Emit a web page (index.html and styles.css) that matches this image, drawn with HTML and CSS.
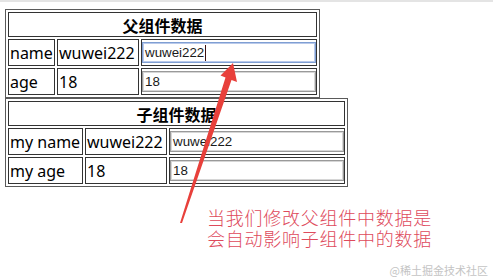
FILE: index.html
```html
<!DOCTYPE html>
<html lang="zh">
<head>
<meta charset="utf-8">
<title>父子组件数据</title>
<link rel="stylesheet" href="styles.css">
</head>
<body>
<div class="topbar"></div>
<main class="content">
  <table class="grid parent">
    <colgroup><col class="k1"><col class="k2"><col class="k3"></colgroup>
    <tr><th colspan="3">父组件数据</th></tr>
    <tr>
      <td>name</td>
      <td>wuwei222</td>
      <td class="c3"><div class="field focused">wuwei222<span class="caret"></span></div></td>
    </tr>
    <tr>
      <td>age</td>
      <td>18</td>
      <td class="c3"><div class="field">18</div></td>
    </tr>
  </table>
  <table class="grid child">
    <colgroup><col class="k1"><col class="k2"><col class="k3"></colgroup>
    <tr><th colspan="3">子组件数据</th></tr>
    <tr>
      <td>my name</td>
      <td>wuwei222</td>
      <td class="c3"><div class="field">wuwei222</div></td>
    </tr>
    <tr>
      <td>my age</td>
      <td>18</td>
      <td class="c3"><div class="field">18</div></td>
    </tr>
  </table>
  <div class="note">
    <p class="note-line">当我们修改父组件中数据是</p>
    <p class="note-line">会自动影响子组件中的数据</p>
  </div>
</main>
<svg class="arrow" width="493" height="278" viewBox="0 0 493 278">
  <polygon points="180,223 225.5,77.5 220.5,75.5 233,63 237,82 231.5,80 182,223" fill="#e8403b"/>
</svg>
<div class="watermark">@稀土掘金技术社区</div>
</body>
</html>
```
FILE: styles.css
```css
html, body {
  margin: 0;
  padding: 0;
  background: #fff;
  width: 493px;
  height: 278px;
  overflow: hidden;
  position: relative;
  font-family: "Noto Sans", "Noto Sans CJK SC", sans-serif;
}
.topbar {
  height: 2px;
  background: #e4e4e4;
}
.content {
  padding: 7px 0 0 5px;
}
.grid {
  border-collapse: separate;
  border-spacing: 2px;
  border: 1px solid #5a5a5a;
  font-size: 16px;
  color: #000;
  table-layout: fixed;
}
.grid th, .grid td {
  border: 1px solid #333;
  padding: 0 1px;
  line-height: 20px;
  white-space: nowrap;
  overflow: hidden;
}
.grid th {
  height: 23px;
  font-weight: 700;
  text-align: center;
  font-family: "Noto Sans CJK SC", sans-serif;
  font-size: 16px;
}
.grid td {
  height: 25px;
  text-align: left;
}
.parent { width: 315px; }
.child { width: 343px; }
.parent .k1 { width: 47px; }
.child .k1 { width: 75px; }
.grid .k2 { width: 82px; }
.grid .k3 { width: 176px; }
.grid .c3 { padding: 0; }
.field {
  box-sizing: border-box;
  width: 174px;
  height: 21px;
  border: 1px solid #9a9a9a;
  box-shadow: inset 0 0 0 1px #d6d6d6;
  padding: 0 2px;
  font-family: "Liberation Sans", Arial, sans-serif;
  font-size: 13.33px;
  line-height: 19px;
  color: #1a1a1a;
  display: flex;
  align-items: center;
}
.field.focused {
  border-color: #7f9fd3;
  box-shadow: inset 0 0 0 1px #b9c9ea;
}
.caret {
  display: inline-block;
  width: 1px;
  height: 16px;
  margin-left: 1px;
  background: #3a1010;
}
.note {
  margin: 21px 0 0 202px;
  display: flex;
  flex-direction: column;
  gap: 3px;
  font-family: "Noto Sans CJK SC", sans-serif;
  font-weight: 300;
  font-size: 18px;
  letter-spacing: 0.75px;
  color: #de4a5c;
}
.note-line {
  margin: 0;
  line-height: 18px;
}
.arrow {
  position: absolute;
  left: 0;
  top: 0;
  pointer-events: none;
}
.watermark {
  position: absolute;
  right: 5px;
  bottom: 2px;
  font-family: "Noto Sans CJK SC", sans-serif;
  font-size: 11px;
  line-height: 12px;
  color: #c4c4c4;
}
```
